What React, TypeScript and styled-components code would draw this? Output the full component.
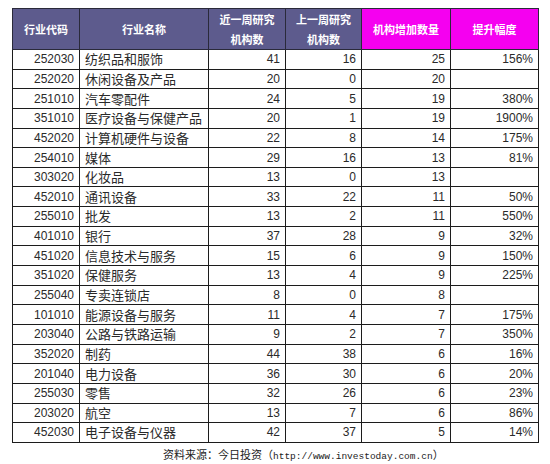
import React from 'react';
import styled, { createGlobalStyle } from 'styled-components';

const GlobalStyle = createGlobalStyle`
	body {
		margin: 0;
		background: #fff;
		font-family: "Liberation Sans", "Noto Sans CJK SC", sans-serif;
		color: #222;
	}
`;

const Page = styled.div`
	width: 550px;
	height: 464px;
	padding: 8px 0 0 12px;
	box-sizing: border-box;
	background: #fff;
`;

const Table = styled.table`
	border-collapse: collapse;
	table-layout: fixed;
	width: 526px;
`;

const HeadCell = styled.th<{ $hot?: boolean }>`
	height: 38px;
	padding: 0 2px;
	border: 1px solid #2a2a3a;
	background: ${({ $hot }) => ($hot ? '#f500f0' : '#5d5b8d')};
	color: #fff;
	font-family: "Noto Sans CJK SC", sans-serif;
	font-size: 11px;
	font-weight: bold;
	line-height: 20px;
	text-align: center;
`;

const Row = styled.tr`
	height: 19.65px;
`;

const Cell = styled.td<{ $left?: boolean }>`
	padding: ${({ $left }) => ($left ? '0 0 0 5px' : '0 5px 0 0')};
	border: 1px solid #1c1c1c;
	font-size: ${({ $left }) => ($left ? '13px' : '12px')};
	font-family: ${({ $left }) =>
		$left ? '"Noto Sans CJK SC", sans-serif' : '"Liberation Sans", "Noto Sans CJK SC", sans-serif'};
	line-height: 16px;
	text-align: ${({ $left }) => ($left ? 'left' : 'right')};
	white-space: nowrap;
	overflow: hidden;
	color: #2a2a2a;
`;

const Source = styled.div`
	padding: 4px 0 0 151px;
	font-family: "Noto Sans CJK SC", sans-serif;
	font-size: 11px;
	line-height: 14px;
	color: #222;
`;

const Url = styled.span`
	font-family: "Liberation Mono", monospace;
	font-size: 9.5px;
`;

const widths = [67, 129, 77, 76, 89, 88];

const rows: [string, string, number, number, number, string][] = [
	['252030', '纺织品和服饰', 41, 16, 25, '156%'],
	['252020', '休闲设备及产品', 20, 0, 20, ''],
	['251010', '汽车零配件', 24, 5, 19, '380%'],
	['351010', '医疗设备与保健产品', 20, 1, 19, '1900%'],
	['452020', '计算机硬件与设备', 22, 8, 14, '175%'],
	['254010', '媒体', 29, 16, 13, '81%'],
	['303020', '化妆品', 13, 0, 13, ''],
	['452010', '通讯设备', 33, 22, 11, '50%'],
	['255010', '批发', 13, 2, 11, '550%'],
	['401010', '银行', 37, 28, 9, '32%'],
	['451020', '信息技术与服务', 15, 6, 9, '150%'],
	['351020', '保健服务', 13, 4, 9, '225%'],
	['255040', '专卖连锁店', 8, 0, 8, ''],
	['101010', '能源设备与服务', 11, 4, 7, '175%'],
	['203040', '公路与铁路运输', 9, 2, 7, '350%'],
	['352020', '制药', 44, 38, 6, '16%'],
	['201040', '电力设备', 36, 30, 6, '20%'],
	['255030', '零售', 32, 26, 6, '23%'],
	['203020', '航空', 13, 7, 6, '86%'],
	['452030', '电子设备与仪器', 42, 37, 5, '14%'],
];

export default function App() {
	return (
		<Page>
			<GlobalStyle />
			<Table>
				<colgroup>
					{widths.map((w, i) => (
						<col key={i} style={{ width: w }} />
					))}
				</colgroup>
				<thead>
					<tr>
						<HeadCell>行业代码</HeadCell>
						<HeadCell>行业名称</HeadCell>
						<HeadCell>
							近一周研究
							<br />
							机构数
						</HeadCell>
						<HeadCell>
							上一周研究
							<br />
							机构数
						</HeadCell>
						<HeadCell $hot>机构增加数量</HeadCell>
						<HeadCell $hot>提升幅度</HeadCell>
					</tr>
				</thead>
				<tbody>
					{rows.map(r => (
						<Row key={r[0]}>
							<Cell>{r[0]}</Cell>
							<Cell $left>{r[1]}</Cell>
							<Cell>{r[2]}</Cell>
							<Cell>{r[3]}</Cell>
							<Cell>{r[4]}</Cell>
							<Cell>{r[5]}</Cell>
						</Row>
					))}
				</tbody>
			</Table>
			<Source>
				资料来源：今日投资（<Url>http://www.investoday.com.cn</Url>）
			</Source>
		</Page>
	);
}
